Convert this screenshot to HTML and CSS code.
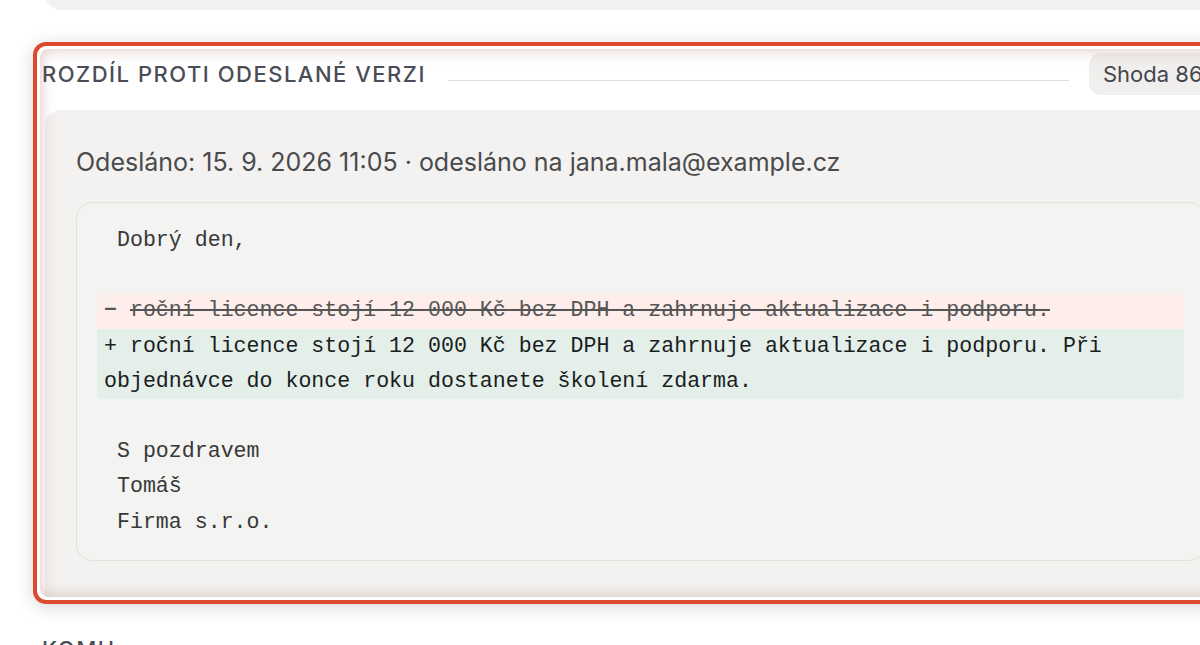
FILE: index.html
```html
<!DOCTYPE html>
<html lang="cs">
<head>
<meta charset="utf-8">
<title>Rozdíl proti odeslané verzi</title>
<link rel="stylesheet" href="styles.css">
</head>
<body>
<div class="page">
  <div class="prev-card"></div>

  <div class="highlight">
    <section class="section">
      <header class="section-head">
        <h2 class="section-title">Rozdíl proti odeslané verzi</h2>
        <div class="head-rule"></div>
        <div class="badge">Shoda 86 %</div>
      </header>
      <div class="card">
        <p class="meta">Odesláno: 15. 9. 2026 11:05 · odesláno na jana.mala@example.cz</p>
        <div class="code">
          <div class="ln ctx"> Dobrý den,</div>
          <div class="ln ctx"> </div>
          <div class="ln del"><span class="sign">−</span> <s>roční licence stojí 12 000 Kč bez DPH a zahrnuje aktualizace i podporu.</s></div>
          <div class="ln add">+ roční licence stojí 12 000 Kč bez DPH a zahrnuje aktualizace i podporu. Při objednávce do konce roku dostanete školení zdarma.</div>
          <div class="ln ctx"> </div>
          <div class="ln ctx"> S pozdravem</div>
          <div class="ln ctx"> Tomáš</div>
          <div class="ln ctx"> Firma s.r.o.</div>
        </div>
      </div>
    </section>
  </div>

  <h2 class="section-title next-title">Komu</h2>
</div>
</body>
</html>
```

FILE: styles.css
```css
html, body {
  margin: 0;
  padding: 0;
  background: #ffffff;
  overflow: hidden;
}
body {
  width: 1200px;
  height: 645px;
  font-family: Inter, "Noto Sans", sans-serif;
  color: #45474f;
}
.page {
  display: flex;
  flex-direction: column;
  align-items: flex-start;
  padding-left: 33px;
  width: 1300px;
}
.prev-card {
  margin-top: -16px;
  margin-left: 12px;
  width: 1250px;
  height: 26px;
  background: #f3f2f0;
  border-bottom-left-radius: 16px;
}
.highlight {
  margin-top: 32px;
  border: 4px solid #dc4a2d;
  border-radius: 13px;
  padding: 3px;
  background: #ffffff;
  box-shadow: 0 3px 18px rgba(0, 0, 0, 0.16);
}
.section {
  position: relative;
  width: 1201px;
  border-radius: 8px;
  overflow: hidden;
  background: #ffffff;
}
.section::after {
  content: "";
  position: absolute;
  inset: 0;
  border-radius: 8px;
  box-shadow: inset 0 0 15px rgba(140, 70, 60, 0.32);
  pointer-events: none;
}
.section-head {
  display: flex;
  align-items: center;
  padding: 4px 0 0 2px;
  height: 42px;
  margin-bottom: 15px;
}
.section-title {
  margin: 0;
  font-size: 22px;
  font-weight: 500;
  letter-spacing: 1.5px;
  text-transform: uppercase;
  color: #4a4d56;
  white-space: nowrap;
}
.head-rule {
  flex: 1;
  height: 1px;
  margin: 12px 20px 0 22px;
  background: #e0e0df;
}
.badge {
  width: 124px;
  height: 42px;
  display: flex;
  align-items: center;
  padding: 0 14px;
  border-radius: 12px;
  background: #f0efed;
  font-size: 22px;
  color: #44464e;
  white-space: nowrap;
}
.card {
  margin: 0 5px;
  padding: 36px 31px;
  background: #f3f2f0;
  border-top-left-radius: 16px;
  border-top-right-radius: 16px;
}
.meta {
  margin: 0 0 24px;
  font-size: 25px;
  line-height: 32px;
  color: #4a4a4c;
  white-space: nowrap;
}
.code {
  border: 1px solid #e2e1de;
  border-radius: 16px;
  background: #f3f3f1;
  padding: 20px;
  font-family: "Liberation Mono", "DejaVu Sans Mono", monospace;
  font-size: 21.6px;
  line-height: 35.2px;
  color: #383838;
}
.ln {
  padding: 0 7px;
  white-space: pre-wrap;
  min-height: 35.2px;
}
.del {
  background: #fdeeeb;
  color: #555555;
  border-radius: 6px 6px 0 0;
}
.del s {
  text-decoration-thickness: 2px;
}
.sign {
  font-weight: 700;
}
.add {
  background: #e3efe8;
  color: #1a1d22;
  border-radius: 0 0 6px 6px;
}
.next-title {
  margin-top: 32px;
  margin-left: 9px;
}
```
